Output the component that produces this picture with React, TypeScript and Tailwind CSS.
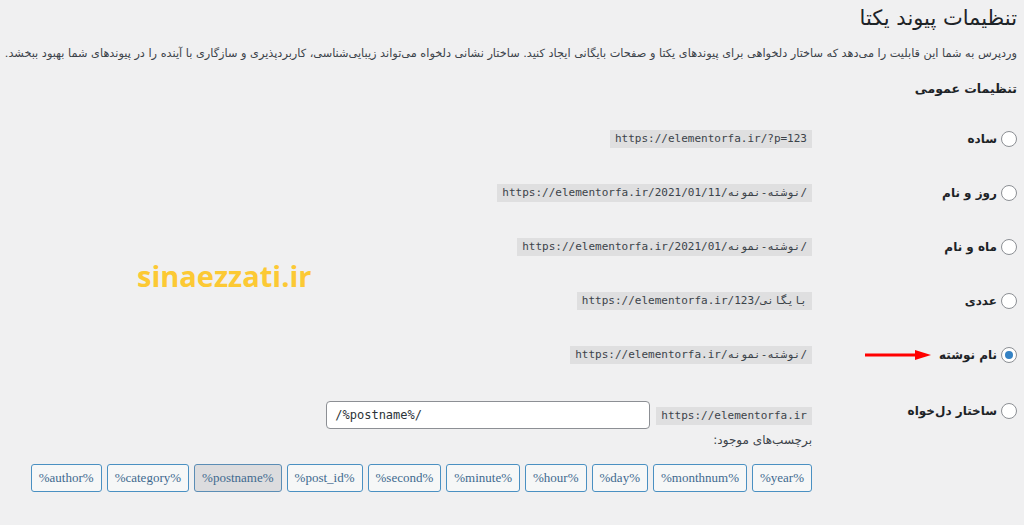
import React from "react";

type Row = {
  label: string;
  sample: string;
  checked?: boolean;
  arrow?: boolean;
};

const rows: Row[] = [
  { label: "ساده", sample: "https://elementorfa.ir/?p=123" },
  { label: "روز و نام", sample: "https://elementorfa.ir/2021/01/11/نوشته-نمونه/" },
  { label: "ماه و نام", sample: "https://elementorfa.ir/2021/01/نوشته-نمونه/" },
  { label: "عددی", sample: "https://elementorfa.ir/بایگانی/123" },
  { label: "نام نوشته", sample: "https://elementorfa.ir/نوشته-نمونه/", checked: true, arrow: true },
];

const tags = [
  "%year%",
  "%monthnum%",
  "%day%",
  "%hour%",
  "%minute%",
  "%second%",
  "%post_id%",
  "%postname%",
  "%category%",
  "%author%",
];

function Radio({ checked }: { checked?: boolean }) {
  return (
    <span className="flex h-4 w-4 shrink-0 items-center justify-center rounded-full border border-[#8c8f94] bg-white">
      {checked && <span className="h-2 w-2 rounded-full bg-[#3582c4]" />}
    </span>
  );
}

function Code({ children }: { children: React.ReactNode }) {
  return (
    <code
      dir="ltr"
      className="inline-block bg-[#dfdfe0] px-[5px] pt-[2px] pb-[2px] font-['DejaVu_Sans_Mono',monospace] text-[11px] leading-[14px] text-[#3c434a]"
    >
      {children}
    </code>
  );
}

function Arrow() {
  return (
    <svg width="66" height="10" viewBox="0 0 66 10" className="mr-[8px] shrink-0">
      <line x1="0" y1="5" x2="52" y2="5" stroke="#f00" strokeWidth="3" />
      <polygon points="50,0 66,5 50,10" fill="#f00" />
    </svg>
  );
}

export default function App() {
  return (
    <div
      dir="rtl"
      className="relative min-h-[525px] overflow-hidden bg-[#f0f0f1] font-['DejaVu_Sans',sans-serif] text-[#3c434a]"
    >
      <div className="pr-[7px] pl-[5px] pt-[3px]">
        <h1 className="text-[21px] leading-[30px] text-[#1d2327]">تنظیمات پیوند یکتا</h1>
        <p className="mt-[11px] whitespace-nowrap text-[11.3px] leading-[20px]">
          وردپرس به شما این قابلیت را می‌دهد که ساختار دلخواهی برای پیوندهای یکتا و صفحات بایگانی ایجاد کنید. ساختار نشانی دلخواه می‌تواند زیبایی‌شناسی، کاربردپذیری و سازگاری با آینده را در پیوندهای شما بهبود ببخشد.
        </p>
        <h2 className="mt-[15px] text-[12.5px] font-bold leading-[20px] text-[#1d2327]">تنظیمات عمومی</h2>

        <div className="mt-[13px]">
          {rows.map((r) => (
            <div key={r.label} className="flex h-[54px] items-center">
              <div className="flex w-[205px] shrink-0 items-center">
                <Radio checked={r.checked} />
                <span className="mr-[4px] text-[12px] font-bold text-[#1d2327]">{r.label}</span>
                {r.arrow && <Arrow />}
              </div>
              <div className="flex flex-1">
                <Code>{r.sample}</Code>
              </div>
            </div>
          ))}

          {/* custom structure */}
          <div className="flex items-start pt-[19px]">
            <div className="mt-[1px] flex h-[18px] w-[205px] shrink-0 items-center">
              <Radio />
              <span className="mr-[4px] text-[12px] font-bold text-[#1d2327]">ساختار دل‌خواه</span>
            </div>
            <div className="flex flex-1 flex-col items-start">
              <div className="flex items-start gap-[6px]">
                <div className="mt-[1px]">
                  <Code>https://elementorfa.ir</Code>
                </div>
                <input
                  dir="ltr"
                  readOnly
                  value="/%postname%/"
                  className="h-[28px] w-[324px] rounded-[4px] border border-[#8c8f94] bg-white px-[8px] font-['DejaVu_Sans_Mono',monospace] text-[12px] text-[#2c3338] outline-none"
                />
              </div>
              <div className="mt-[2px] text-[12px] leading-[18px]">برچسب‌های موجود:</div>
              <div className="mt-[15px] flex flex-wrap gap-[5px]">
                {tags.map((t) => (
                  <button
                    key={t}
                    dir="ltr"
                    className={
                      t === "%postname%"
                        ? "h-[28px] rounded-[3px] border border-[#5b8db5] bg-[#dcdcde] px-[7px] font-['Liberation_Serif',serif] text-[13px] text-[#3f6a8f]"
                        : "h-[28px] rounded-[3px] border border-[#4a90c2] bg-[#f6f7f7] px-[7px] font-['Liberation_Serif',serif] text-[13px] text-[#3f6a8f]"
                    }
                  >
                    {t}
                  </button>
                ))}
              </div>
            </div>
          </div>
        </div>
      </div>

      {/* watermark */}
      <div
        dir="ltr"
        className="absolute left-[137px] top-[254px] font-['Open_Sans',sans-serif] text-[29px] font-bold text-[#fcc934]"
      >
        sinaezzati.ir
      </div>
    </div>
  );
}
